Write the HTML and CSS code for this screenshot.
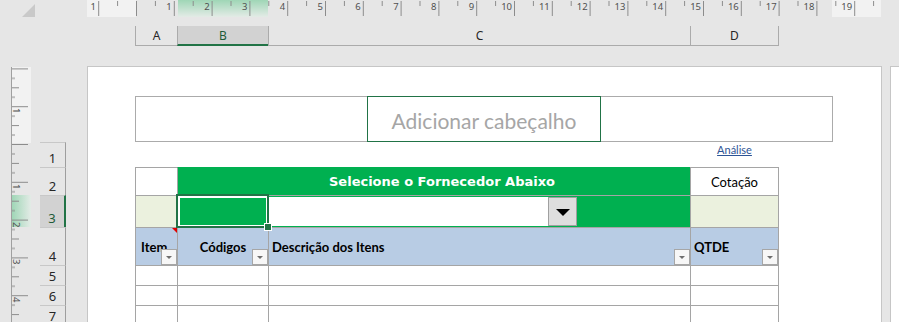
FILE: index.html
```html
<!DOCTYPE html>
<html>

<head>
	<meta charset="utf-8">
	<title>Cotação - layout de página</title>
	<link rel="stylesheet" href="styles.css">
</head>

<body>
	<svg class="ruler-top" width="899" height="18" viewBox="0 0 899 18">
		<defs>
			<linearGradient id="hl-top" x1="0" y1="0" x2="0" y2="1">
				<stop offset="0" stop-color="#9fd6b6" />
				<stop offset="1" stop-color="#e3ebe6" />
			</linearGradient>
			<pattern id="ticks-top" x="136" y="0" width="37.8" height="18" patternUnits="userSpaceOnUse">
				<path d="M0.5 1V16M19.4 1V6" stroke="#8c8c8c" stroke-width="1" />
			</pattern>
		</defs>
		<polygon points="22,17 35,17 35,4" fill="#c9c9c9" />
		<rect x="87" y="0" width="49" height="17" fill="#f2f2f2" />
		<rect x="832" y="0" width="49" height="17" fill="#f2f2f2" />
		<rect x="178" y="0" width="90" height="17" fill="url(#hl-top)" />
		<rect x="87" y="0" width="794" height="17" fill="url(#ticks-top)" />
		<g class="ruler-num" text-anchor="end">
			<text x="96" y="10">1</text>
			<text x="171.8" y="10">1</text>
			<text x="209.6" y="10">2</text>
			<text x="247.4" y="10">3</text>
			<text x="285.2" y="10">4</text>
			<text x="323" y="10">5</text>
			<text x="360.8" y="10">6</text>
			<text x="398.6" y="10">7</text>
			<text x="436.4" y="10">8</text>
			<text x="474.2" y="10">9</text>
			<text x="512" y="10">10</text>
			<text x="549.8" y="10">11</text>
			<text x="587.6" y="10">12</text>
			<text x="625.4" y="10">13</text>
			<text x="663.2" y="10">14</text>
			<text x="701" y="10">15</text>
			<text x="738.8" y="10">16</text>
			<text x="776.6" y="10">17</text>
			<text x="814.4" y="10">18</text>
			<text x="852.2" y="10">19</text>
		</g>
	</svg>

	<div class="col-heads">
		<div class="col-head col-a">A</div>
		<div class="col-head col-b selected">B</div>
		<div class="col-head col-c">C</div>
		<div class="col-head col-d">D</div>
	</div>

	<div class="workspace">
		<div class="side">
			<svg class="ruler-left" width="31" height="256" viewBox="0 0 31 256">
				<defs>
					<linearGradient id="hl-left" x1="0" y1="0" x2="1" y2="0">
						<stop offset="0" stop-color="#9fd6b6" />
						<stop offset="1" stop-color="#e3ebe6" />
					</linearGradient>
					<pattern id="ticks-left" x="0" y="78" width="31" height="37.8" patternUnits="userSpaceOnUse">
						<path d="M12 0.5H28M12 9.95H15M12 19.4H19M12 28.85H15" stroke="#8c8c8c" stroke-width="1" />
					</pattern>
				</defs>
				<rect x="12" y="1" width="19" height="76" fill="#f2f2f2" />
				<rect x="12" y="129" width="19" height="32" fill="url(#hl-left)" />
				<rect x="12" y="1" width="19" height="255" fill="url(#ticks-left)" />
				<path d="M11.5 1V256" stroke="#a0a0a0" stroke-width="1" />
				<g class="ruler-num">
					<text transform="translate(13 42) rotate(90)">1</text>
					<text transform="translate(13 118) rotate(90)">1</text>
					<text transform="translate(13 156) rotate(90)">2</text>
					<text transform="translate(13 193) rotate(90)">3</text>
					<text transform="translate(13 231) rotate(90)">4</text>
				</g>
			</svg>
			<div class="row-heads">
				<div class="row-head h25">1</div>
				<div class="row-head h28">2</div>
				<div class="row-head h32 selected">3</div>
				<div class="row-head h38">4</div>
				<div class="row-head h20">5</div>
				<div class="row-head h20">6</div>
				<div class="row-head h20">7</div>
			</div>
		</div>

		<div class="page">
			<div class="page-header">
				<div class="header-center">Adicionar cabeçalho</div>
			</div>

			<div class="sheet">
				<!-- linha 1 -->
				<div></div>
				<div></div>
				<div></div>
				<div class="link-cell"><a href="#">Análise</a></div>

				<!-- linha 2 -->
				<div class="cell"></div>
				<div class="cell title">Selecione o Fornecedor Abaixo</div>
				<div class="cell end center">Cotação</div>

				<!-- linha 3 -->
				<div class="cell soft"></div>
				<div class="cell green sel"></div>
				<div class="cell green combo-cell">
					<div class="combo">
						<div class="combo-field"></div>
						<div class="combo-btn"><span class="arrow"></span></div>
					</div>
				</div>
				<div class="cell end soft"></div>

				<!-- linha 4 -->
				<div class="cell head note">Item<span class="filter"></span></div>
				<div class="cell head center">Códigos<span class="filter"></span></div>
				<div class="cell head">Descrição dos Itens<span class="filter"></span></div>
				<div class="cell head end">QTDE<span class="filter"></span></div>

				<!-- linhas 5 a 7 -->
				<div class="cell"></div>
				<div class="cell"></div>
				<div class="cell"></div>
				<div class="cell end"></div>
				<div class="cell"></div>
				<div class="cell"></div>
				<div class="cell"></div>
				<div class="cell end"></div>
				<div class="cell"></div>
				<div class="cell"></div>
				<div class="cell"></div>
				<div class="cell end"></div>
			</div>
		</div>

		<div></div>
		<div class="page"></div>
	</div>
</body>

</html>
```

FILE: styles.css
```css
* {
	box-sizing: border-box;
}

html {
	font-family: 'Lato', sans-serif;
}

body {
	margin: 0;
	width: 899px;
	height: 322px;
	overflow: hidden;
	background: #e6e6e6;
}

.ruler-top {
	display: block;
}

.ruler-num {
	font-family: 'Noto Sans', sans-serif;
	font-size: 9.5px;
	fill: #505050;
}

/* cabeçalhos de coluna */
.col-heads {
	display: flex;
	height: 20px;
	margin-top: 8px;
	padding-left: 135px;
	font-family: 'Noto Sans', sans-serif;
	font-size: 12px;
	color: #262626;
}

.col-head {
	display: flex;
	align-items: center;
	justify-content: center;
	border-left: 1px solid #ababab;
	border-bottom: 1px solid #ababab;
}

.col-a {
	width: 42px;
}

.col-b {
	width: 91px;
}

.col-c {
	width: 422px;
}

.col-d {
	width: 89px;
	border-right: 1px solid #ababab;
}

.col-head.selected {
	background: #d2d2d2;
	border-bottom: 2px solid #217346;
	color: #1e5b38;
}

/* área de trabalho */
.workspace {
	display: grid;
	grid-template-columns: 87px 795px 8px 1fr;
	height: 256px;
	margin-top: 20px;
}

.side {
	display: flex;
}

.ruler-left {
	display: block;
	flex: none;
}

.row-heads {
	width: 26px;
	margin-left: 9px;
	padding-top: 76px;
	font-family: 'Noto Sans', sans-serif;
	font-size: 13px;
	color: #262626;
}

.row-head {
	display: flex;
	align-items: flex-end;
	justify-content: center;
	border-top: 1px solid #c8c8c8;
	border-right: 1px solid #9e9e9e;
}

.row-head.selected {
	background: #d2d2d2;
	border-right: 2px solid #217346;
	color: #1e5b38;
}

.h20 {
	height: 20px;
}

.h25 {
	height: 25px;
}

.h28 {
	height: 28px;
}

.h32 {
	height: 32px;
}

.h38 {
	height: 38px;
}

.page {
	background: #fff;
	border: 1px solid #c6c6c6;
	border-bottom: none;
	padding: 29px 0 0 47px;
}

.page-header {
	display: flex;
	justify-content: center;
	width: 698px;
	height: 46px;
	border: 1px solid #ababab;
}

.header-center {
	display: flex;
	align-items: center;
	justify-content: center;
	width: 234px;
	margin: -1px 0;
	padding-top: 3px;
	border: 1px solid #217346;
	color: #a6a6a6;
	font-size: 21px;
}

/* planilha */
.sheet {
	display: grid;
	grid-template-columns: 42px 91px 422px 89px;
	grid-template-rows: 25px 28px 32px 38px 20px 20px 20px;
	font-size: 13px;
	color: #000;
}

.cell {
	position: relative;
	display: flex;
	align-items: center;
	border-left: 1px solid #a5a5a5;
	border-top: 1px solid #a5a5a5;
}

.cell.end {
	border-right: 1px solid #a5a5a5;
}

.center {
	justify-content: center;
}

.link-cell {
	padding-top: 2px;
	text-align: center;
	font-size: 11px;
	line-height: 12px;
}

.link-cell a {
	color: #2e5496;
}

.title {
	grid-column: span 2;
	justify-content: center;
	padding-left: 16px;
	background: #00b050;
	border-top-color: #00b050;
	color: #fff;
	font-family: 'DejaVu Sans', sans-serif;
	font-size: 13px;
	font-weight: bold;
}

.soft {
	background: #ebf1de;
}

.green {
	background: #00b050;
}

.sel {
	outline: 2px solid #217346;
	outline-offset: -1px;
	box-shadow: inset 0 0 0 2px #fff;
	z-index: 1;
}

.sel::after {
	content: '';
	position: absolute;
	right: -4px;
	bottom: -4px;
	width: 6px;
	height: 6px;
	background: #217346;
	border: 1px solid #fff;
}

.combo-cell {
	align-items: flex-start;
	padding-top: 1px;
}

.combo {
	display: flex;
	width: 308px;
	height: 29px;
	background: #fff;
}

.combo-field {
	flex: 1;
}

.combo-btn {
	display: flex;
	align-items: center;
	justify-content: center;
	width: 29px;
	padding-top: 1px;
	background: #dedede;
	border: 1px solid #a0a0a0;
}

.arrow {
	border-left: 7px solid transparent;
	border-right: 7px solid transparent;
	border-top: 7px solid #000;
}

.head {
	background: #b8cce4;
	font-weight: bold;
	padding-left: 3px;
}

.head.note {
	padding-left: 5px;
}

.head.center {
	padding-left: 0;
}

.note::before {
	content: '';
	position: absolute;
	top: 0;
	right: 0;
	border-top: 5px solid #e00000;
	border-left: 5px solid transparent;
}

.filter {
	position: absolute;
	right: 0;
	bottom: 0;
	width: 16px;
	height: 16px;
	background: #f7f7f7;
	border: 1px solid #a6a6a6;
}

.filter::after {
	content: '';
	position: absolute;
	left: 4px;
	top: 6px;
	border-left: 3px solid transparent;
	border-right: 3px solid transparent;
	border-top: 3px solid #6e6e6e;
}
```
